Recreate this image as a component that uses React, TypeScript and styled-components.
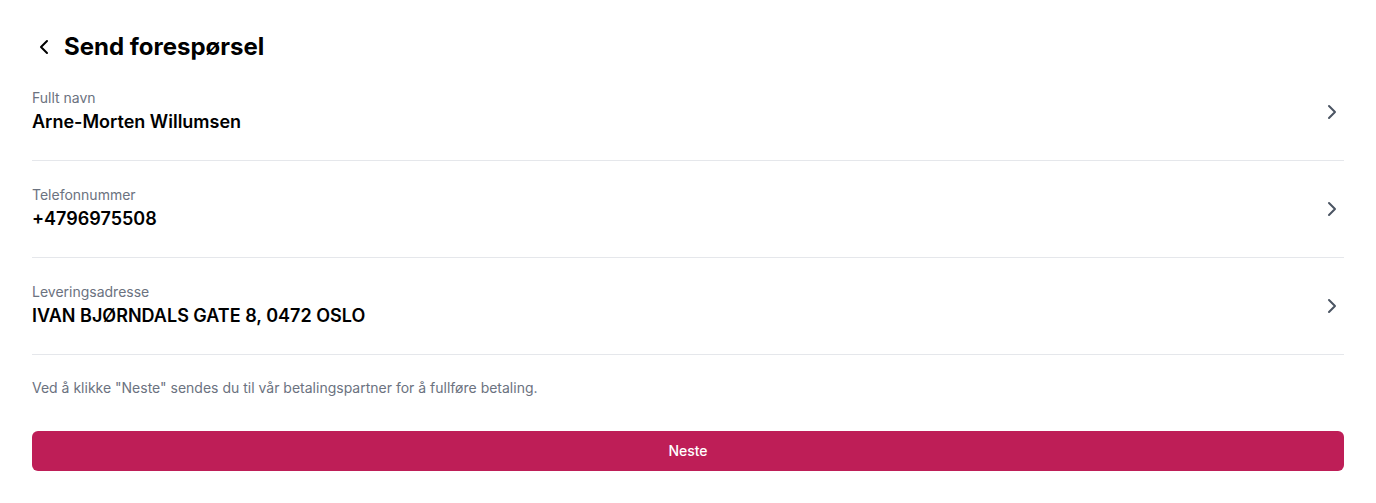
import React from 'react'
import styled, { createGlobalStyle } from 'styled-components'
import { ChevronLeft, ChevronRight } from 'lucide-react'

const GlobalStyle = createGlobalStyle`
  body {
    margin: 0;
    background: #ffffff;
    font-family: Inter, "Noto Sans", sans-serif;
    color: #000000;
  }
`

type Field = { label: string; value: string }

const fields: Field[] = [
  { label: 'Fullt navn', value: 'Arne-Morten Willumsen' },
  { label: 'Telefonnummer', value: '+4796975508' },
  { label: 'Leveringsadresse', value: 'IVAN BJØRNDALS GATE 8, 0472 OSLO' },
]

const App: React.FC = () => {
  return (
    <>
      <GlobalStyle />
      <Page>
        <Header>
          <BackButton aria-label="Tilbake">
            <ChevronLeft size={24} strokeWidth={2} />
          </BackButton>
          <Title>Send forespørsel</Title>
        </Header>
        <List>
          {fields.map((f) => (
            <Row key={f.label}>
              <RowText>
                <Label>{f.label}</Label>
                <Value>{f.value}</Value>
              </RowText>
              <ChevronRight size={24} strokeWidth={2} color="#4b5563" />
            </Row>
          ))}
        </List>
        <Notice>
          Ved å klikke "Neste" sendes du til vår betalingspartner for å fullføre betaling.
        </Notice>
        <NextButton>Neste</NextButton>
      </Page>
    </>
  )
}

const Page = styled.div`
  padding: 29px 32px 32px;
  display: flex;
  flex-direction: column;
`

const Header = styled.div`
  display: flex;
  align-items: center;
  gap: 8px;
  height: 35px;
`

const BackButton = styled.button`
  display: flex;
  align-items: center;
  justify-content: center;
  padding: 0;
  border: none;
  background: none;
  color: #000000;
  cursor: pointer;
`

const Title = styled.h1`
  margin: 0;
  font-size: 24px;
  line-height: 32px;
  font-weight: 700;
  color: #000000;
`

const List = styled.div`
  display: flex;
  flex-direction: column;
`

const Row = styled.div`
  display: flex;
  align-items: center;
  justify-content: space-between;
  padding: 24px 0;
  border-bottom: 1px solid #e5e7eb;
  cursor: pointer;
`

const RowText = styled.div`
  display: flex;
  flex-direction: column;
`

const Label = styled.span`
  font-size: 14px;
  line-height: 20px;
  color: #6b7280;
`

const Value = styled.span`
  font-size: 18px;
  line-height: 28px;
  font-weight: 600;
  color: #000000;
`

const Notice = styled.p`
  margin: 23px 0 0;
  font-size: 14px;
  line-height: 20px;
  color: #6b7280;
`

const NextButton = styled.button`
  margin-top: 33px;
  height: 40px;
  padding: 0 0 2px;
  border: none;
  border-radius: 6px;
  background: #be1e57;
  color: #ffffff;
  font-family: Inter, "Noto Sans", sans-serif;
  font-size: 14px;
  font-weight: 500;
  cursor: pointer;
`

export default App
